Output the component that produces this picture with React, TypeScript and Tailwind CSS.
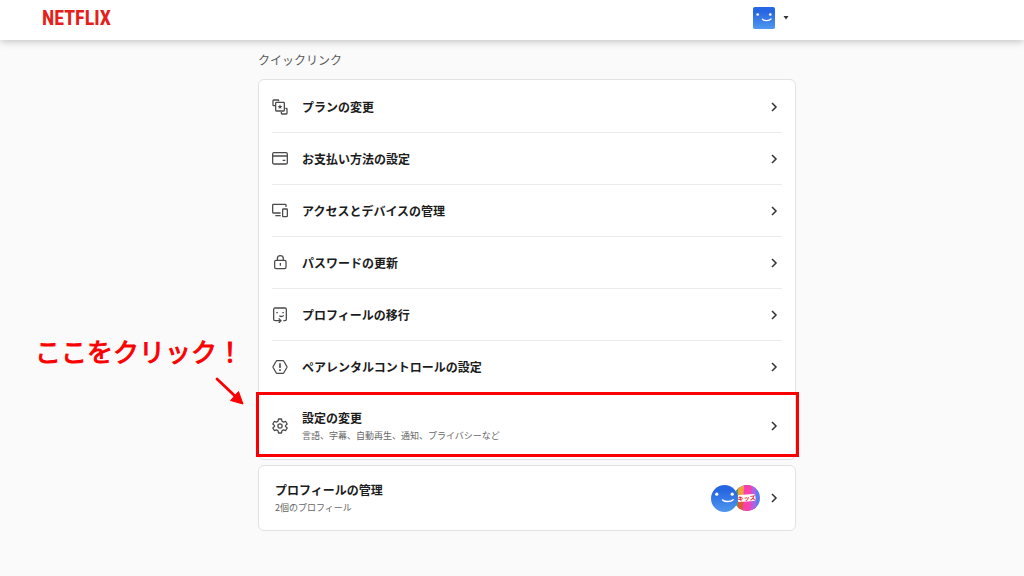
import type { ReactNode } from 'react';

function Icon({ children }: { children: ReactNode }) {
  return (
    <svg
      viewBox="0 0 24 24"
      className="size-4 shrink-0 text-[#4a4a4a]"
      fill="none"
      stroke="currentColor"
      strokeWidth="1.900"
      aria-hidden="true"
    >
      {children}
    </svg>
  );
}

const PlanIcon = () => (
  <Icon>
    <path d="M4.500 10H2.500a1 1 0 0 1-1-1V2.500a1 1 0 0 1 1-1H9a1 1 0 0 1 1 1v1" />
    <rect x="5.500" y="5" width="13" height="13" rx="1" />
    <path d="M20 14h1.500a1 1 0 0 1 1 1v6.500a1 1 0 0 1-1 1H15a1 1 0 0 1-1-1v-2" />
    <path
      d="m12 8 1 2.400 2.600.2-2 1.700.6 2.500-2.200-1.400-2.200 1.400.6-2.500-2-1.700 2.600-.2z"
      fill="currentColor"
      stroke="none"
    />
  </Icon>
);

const CardIcon = () => (
  <Icon>
    <rect x="1" y="2.500" width="22" height="17" rx="2" />
    <path d="M1 7.500h22M16 14h4" />
  </Icon>
);

const DevicesIcon = () => (
  <Icon>
    <path d="M13 15H2a1 1 0 0 1-1-1V3a1 1 0 0 1 1-1h18a1 1 0 0 1 1 1v3" />
    <path d="M5 19h8" />
    <rect x="16" y="9" width="7" height="11.500" rx="1" />
  </Icon>
);

const LockIcon = () => (
  <Icon>
    <rect x="4" y="8" width="17" height="12.500" rx="2" />
    <path d="M8 8V5.500a4.500 4.500 0 0 1 9 0V8M12.500 12v4" />
  </Icon>
);

const TransferIcon = () => (
  <Icon>
    <path d="M6 20.500H4.500a2 2 0 0 1-2-2v-15a2 2 0 0 1 2-2h15a2 2 0 0 1 2 2v15a2 2 0 0 1-2 2H17" />
    <path d="M6.500 8.500h2.200M15.500 8.500h2.200M11 13c2 1.500 5 1.200 6.500-.5M6 20.500h7M10 17l3.500 3.500L10 24" />
  </Icon>
);

const ParentalIcon = () => (
  <Icon>
    <path d="M7.500 2.500h9a1.500 1.500 0 0 1 1.300.8l4.500 8a1.500 1.500 0 0 1 0 1.400l-4.500 8a1.500 1.500 0 0 1-1.300.8h-9a1.500 1.500 0 0 1-1.300-.8l-4.500-8a1.500 1.500 0 0 1 0-1.400l4.500-8a1.500 1.500 0 0 1 1.300-.8z" />
    <path d="M12 6.500v7M12 15.500v2.500" strokeWidth="2.400" />
  </Icon>
);

const GearIcon = () => (
  <Icon>
    <path
      strokeLinejoin="round"
      d="M9.800 1.500h4.400l.8 3.400 2.200 1.300 3.400-1 2.200 3.800-2.600 2.400v1.200l2.600 2.400-2.200 3.800-3.400-1-2.200 1.300-.8 3.400H9.800L9 19.100l-2.200-1.300-3.400 1L1.200 15l2.600-2.400v-1.200L1.200 9l2.200-3.800 3.400 1L9 4.900z"
    />
    <circle cx="12" cy="12" r="3.200" />
  </Icon>
);

function Chevron() {
  return (
    <svg
      viewBox="0 0 16 16"
      className="size-4 shrink-0 text-[#333]"
      fill="none"
      stroke="currentColor"
      strokeWidth="1.500"
      aria-hidden="true"
    >
      <path d="m6 4 4 4-4 4" />
    </svg>
  );
}

function Face({ className }: { className: string }) {
  return (
    <svg viewBox="0 0 28 28" className={className} aria-hidden="true">
      <defs>
        <linearGradient id="face-blue" x1="0" y1="0" x2="0" y2="1">
          <stop offset="0.200" stopColor="#2766e2" />
          <stop offset="1" stopColor="#4f97ee" />
        </linearGradient>
      </defs>
      <rect width="28" height="28" fill="url(#face-blue)" />
      <circle cx="6" cy="9.500" r="1.700" fill="#fff" />
      <circle cx="22" cy="9.500" r="1.700" fill="#fff" />
      <path
        d="M12 15.500c2.500 2.300 8.500 2.300 11-.2"
        fill="none"
        stroke="#fff"
        strokeWidth="1.600"
        strokeLinecap="round"
      />
    </svg>
  );
}

function KidsAvatar() {
  return (
    <svg viewBox="0 0 26 26" className="-ml-1 size-[26px] rounded-full" aria-hidden="true">
      <rect width="26" height="26" fill="#5b7ff0" />
      <path d="M0 0h6v26H0z" fill="#5c9a58" />
      <path d="M4 0h6l1 26H4z" fill="#efa13c" />
      <path d="M4 15h6v11H4z" fill="#dd5a35" />
      <path d="M10 0h8l-1 26H9z" fill="#fb3fae" />
      <path d="M18 0h4v26h-5z" fill="#b062e2" />
      <rect x="3.500" y="9.500" width="18" height="7" rx="2" fill="#fff" transform="rotate(-4 13 13)" />
      <text
        x="12.500"
        y="15.500"
        textAnchor="middle"
        fontSize="6"
        fontWeight="700"
        fill="#e5202a"
        transform="rotate(-4 13 13)"
      >
        キッズ
      </text>
    </svg>
  );
}

const links = [
  { label: 'プランの変更', icon: <PlanIcon /> },
  { label: 'お支払い方法の設定', icon: <CardIcon /> },
  { label: 'アクセスとデバイスの管理', icon: <DevicesIcon /> },
  { label: 'パスワードの更新', icon: <LockIcon /> },
  { label: 'プロフィールの移行', icon: <TransferIcon /> },
  { label: 'ペアレンタルコントロールの設定', icon: <ParentalIcon /> },
];

function Callout() {
  return (
    <div className="pointer-events-none absolute -top-px -right-[17px] bottom-0.5 -left-4 border-3 border-[#fb0000]">
      <p className="absolute right-full bottom-full mr-4 mb-7 text-[26px] leading-8 font-normal whitespace-nowrap text-[#fb0000] [-webkit-text-stroke:1px_#fb0000]">
        ここをクリック！
      </p>
      <svg
        viewBox="0 0 30 30"
        className="absolute right-full bottom-full mr-3.5 -mb-3 size-[30px]"
        aria-hidden="true"
      >
        <path d="m2 2 18 17" stroke="#fb0000" strokeWidth="2.800" strokeLinecap="round" />
        <path d="m15.500 23.500 8-9L28 27z" fill="#fb0000" stroke="#fb0000" strokeLinejoin="round" />
      </svg>
    </div>
  );
}

export default function App() {
  return (
    <div
      lang="ja"
      className="min-h-screen bg-[#fafafa] font-['Noto_Sans_CJK_JP','Noto_Sans',sans-serif] text-[#1c1c1c]"
    >
      <header className="flex h-10 items-center bg-white pr-4 pb-1 pl-[42px] shadow-[0_1px_8px_rgba(0,0,0,0.25)]">
        <a
          href="#home"
          className="w-[711px] font-['Roboto_Condensed','Liberation_Sans',sans-serif] text-xl leading-6 font-bold text-[#e5201a]"
        >
          NETFLIX
        </a>
        <button type="button" aria-label="アカウントメニュー" className="flex items-center gap-2">
          <Face className="size-[22px] rounded-xs" />
          <svg viewBox="0 0 6 4" className="h-1 w-1.5" aria-hidden="true">
            <path d="M.5 0h5L3 3.500z" fill="#333" />
          </svg>
        </button>
      </header>

      <main className="ml-[258px] max-w-[538px] pb-10">
        <h1 className="pt-2.5 text-xs leading-5 text-[#5a5a5a]">クイックリンク</h1>

        <nav
          aria-label="クイックリンク"
          className="mt-[9px] rounded-md border border-[#e2e2e2] bg-white px-[13px] pt-px"
        >
          {links.map((link) => (
            <a
              key={link.label}
              href="#link"
              className="flex h-[52px] items-center border-b border-[#ebebeb]"
            >
              {link.icon}
              <span className="ml-3.5 flex-1 text-xs font-bold">{link.label}</span>
              <Chevron />
            </a>
          ))}
          <div className="relative">
            <a href="#settings" className="flex items-center py-[15px]">
              <GearIcon />
              <span className="ml-3.5 flex-1">
                <span className="block text-xs leading-5 font-bold">設定の変更</span>
                <span className="block text-[9px] leading-4 text-[#666]">
                  言語、字幕、自動再生、通知、プライバシーなど
                </span>
              </span>
              <Chevron />
            </a>
            <Callout />
          </div>
        </nav>

        <a
          href="#profiles"
          className="mt-[5px] flex items-center rounded-md border border-[#e2e2e2] bg-white py-3.5 pr-[13px] pl-4"
        >
          <span className="flex-1">
            <span className="block text-xs leading-5 font-bold">プロフィールの管理</span>
            <span className="block text-[9px] leading-4 text-[#666]">2個のプロフィール</span>
          </span>
          <span className="mr-1.5 flex items-center">
            <Face className="relative size-[27px] rounded-full" />
            <KidsAvatar />
          </span>
          <Chevron />
        </a>
      </main>
    </div>
  );
}
